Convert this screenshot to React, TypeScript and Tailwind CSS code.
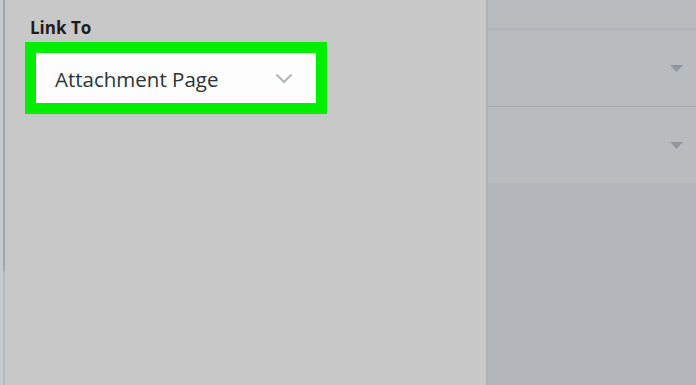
export default function App() {
  return (
    <div className="flex h-[385px] w-[696px] overflow-hidden bg-[#c9c9c9] font-['Open_Sans','Noto_Sans',sans-serif]">
      <div className="flex w-[5px] flex-col">
        <div className="ml-[3px] h-[270px] w-[2px] bg-[#a3a7ab]" />
        <div className="ml-[3px] flex-1 w-[2px] bg-[#b4b8bb]" />
      </div>

      <div className="flex-1 bg-[#c8c8c8] pl-[20px] pt-[17px]">
        <div className="pl-[5px] text-[17px] font-bold leading-[22px] text-[#1d1d1d]">Link To</div>
        <div className="mt-[3px] w-[302px] border-[11px] border-[#00ee00] bg-[#fdfdfd]">
          <div className="flex h-[50px] items-center pl-[19px] pr-[23px]">
            <span className="flex-1 pt-[2px] text-[20.5px] leading-none text-[#2c3338]">Attachment Page</span>
            <svg width="18" height="11" viewBox="0 0 18 11" fill="none">
              <path d="M1.5 1.5 L9 9 L16.5 1.5" stroke="#b3b6b9" strokeWidth="2" />
            </svg>
          </div>
        </div>
      </div>

      <div className="flex w-[210px] flex-col border-l-2 border-[#aeb2b6] bg-[#b9bcbf]">
        <div className="h-[30px] border-b-2 border-[#b0b3b7]" />
        <div className="flex h-[77px] items-center justify-end border-b border-[#a8acb0] pr-[13px]">
          <svg width="13" height="7" viewBox="0 0 13 7">
            <path d="M0 0 H13 L6.5 7 Z" fill="#8f979e" />
          </svg>
        </div>
        <div className="flex h-[76px] items-center justify-end pr-[13px]">
          <svg width="13" height="7" viewBox="0 0 13 7">
            <path d="M0 0 H13 L6.5 7 Z" fill="#8f979e" />
          </svg>
        </div>
        <div className="flex-1 bg-[#b2b5b9]" />
      </div>
    </div>
  );
}
